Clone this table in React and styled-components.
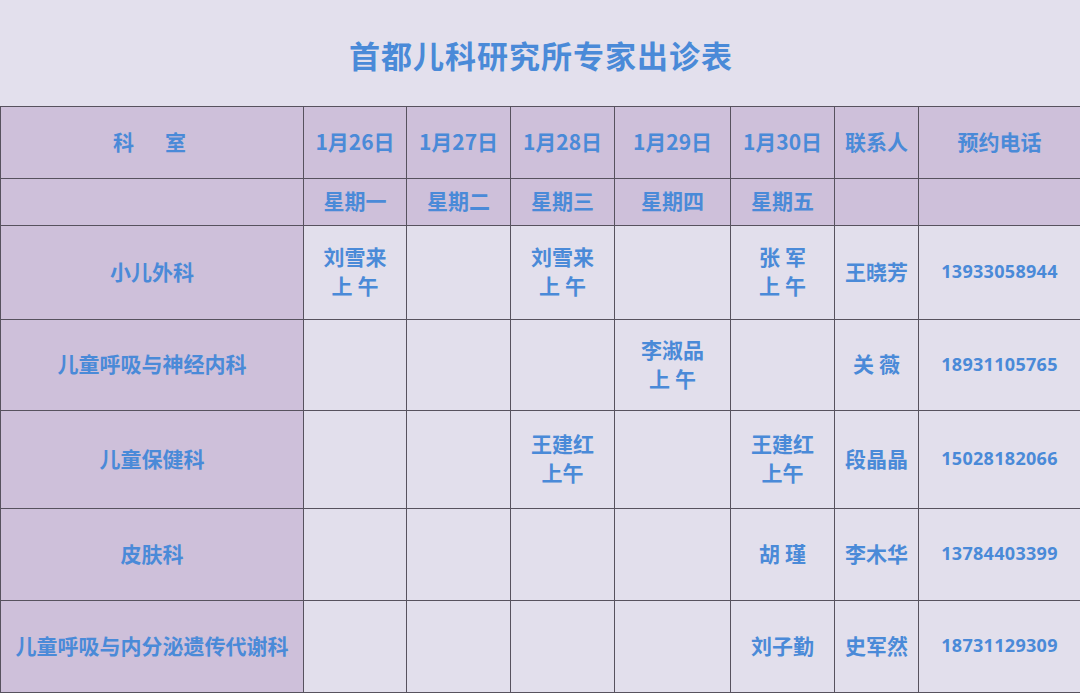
import React from 'react'
import styled, { createGlobalStyle } from 'styled-components'

const GlobalStyle = createGlobalStyle`
  html, body {
    margin: 0;
    padding: 0;
    background: #e3e0ed;
  }
  body {
    font-family: "Noto Sans CJK SC", "Noto Sans", sans-serif;
  }
`

const blue = '#4a8ad8'
const line = '#57525e'
const purple = '#cec0da'
const pale = '#e2dfec'

const days = [
  { date: '1月26日', week: '星期一' },
  { date: '1月27日', week: '星期二' },
  { date: '1月28日', week: '星期三' },
  { date: '1月29日', week: '星期四' },
  { date: '1月30日', week: '星期五' },
]

const rows = [
  {
    dept: '小儿外科',
    slots: [['刘雪来', '上 午'], null, ['刘雪来', '上 午'], null, ['张 军', '上 午']],
    contact: '王晓芳',
    phone: '13933058944',
  },
  {
    dept: '儿童呼吸与神经内科',
    slots: [null, null, null, ['李淑品', '上 午'], null],
    contact: '关 薇',
    phone: '18931105765',
  },
  {
    dept: '儿童保健科',
    slots: [null, null, ['王建红', '上午'], null, ['王建红', '上午']],
    contact: '段晶晶',
    phone: '15028182066',
  },
  {
    dept: '皮肤科',
    slots: [null, null, null, null, ['胡 瑾']],
    contact: '李木华',
    phone: '13784403399',
  },
  {
    dept: '儿童呼吸与内分泌遗传代谢科',
    slots: [null, null, null, null, ['刘子勤']],
    contact: '史军然',
    phone: '18731129309',
  },
]

const Page = styled.div`
  width: 1080px;
  height: 693px;
  overflow: hidden;
  background: #e3e0ed;
`

const TitleBar = styled.div`
  height: 106px;
  display: flex;
  align-items: center;
  justify-content: center;
  padding-left: 2px;
  box-sizing: border-box;
`

const Title = styled.h1`
  margin: 0;
  color: ${blue};
  font-size: 31px;
  font-weight: 700;
  letter-spacing: 1px;
  padding-top: 2px;
`

const Grid = styled.div`
  display: grid;
  grid-template-columns: 302px 102px 103px 103px 115px 103px 83px 161px;
  grid-template-rows: 71px 46px 93px 90px 97px 91px 91px;
  gap: 1px;
  padding: 1px 0 1px 1px;
  background: ${line};
`

const Cell = styled.div`
  background: ${p => (p.$shade ? purple : pale)};
  color: ${blue};
  font-weight: 700;
  font-size: ${p => (p.$small ? '18px' : '21px')};
  line-height: 29px;
  display: flex;
  flex-direction: column;
  align-items: center;
  justify-content: center;
  text-align: center;
  white-space: pre;
  padding-bottom: 3px;
  box-sizing: border-box;
  ${p => p.$phone && `font-family: "Noto Sans", "Open Sans", sans-serif; letter-spacing: 0.3px; padding-bottom: 2px;`}
`

const Dept = styled.span`
  letter-spacing: ${p => (p.$wide ? '5px' : '0')};
`

export default function App() {
  return (
    <Page>
      <GlobalStyle />
      <TitleBar>
        <Title>首都儿科研究所专家出诊表</Title>
      </TitleBar>
      <Grid>
        <Cell $shade>
          <Dept $wide>科　室</Dept>
        </Cell>
        {days.map(d => (
          <Cell $shade key={d.date}>{d.date}</Cell>
        ))}
        <Cell $shade>联系人</Cell>
        <Cell $shade>预约电话</Cell>

        <Cell $shade />
        {days.map(d => (
          <Cell $shade key={d.week}>{d.week}</Cell>
        ))}
        <Cell $shade />
        <Cell $shade />

        {rows.map(r => (
          <React.Fragment key={r.dept}>
            <Cell $shade>
              <Dept>{r.dept}</Dept>
            </Cell>
            {r.slots.map((s, i) => (
              <Cell key={i}>
                {s && s.map(t => <span key={t}>{t}</span>)}
              </Cell>
            ))}
            <Cell>{r.contact}</Cell>
            <Cell $small $phone>{r.phone}</Cell>
          </React.Fragment>
        ))}
      </Grid>
    </Page>
  )
}
